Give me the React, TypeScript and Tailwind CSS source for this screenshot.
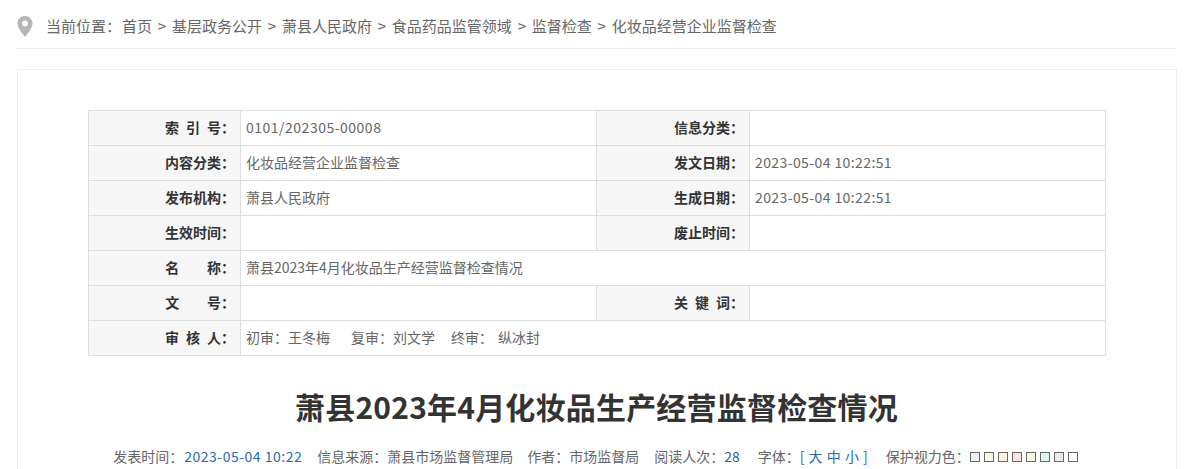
import React from 'react';

const font = "font-['Noto_Sans_CJK_SC','Liberation_Sans',sans-serif]";

const crumbs = ['基层政务公开', '萧县人民政府', '食品药品监管领域', '监督检查', '化妆品经营企业监督检查'];

const swatches = ['bg-[#eef0f4]', 'bg-[#f9fbe8]', 'bg-[#fdf1e3]', 'bg-[#fde3dd]', 'bg-[#f0fcdf]', 'bg-[#dcf8ef]', 'bg-[#e9e9ee]', 'bg-white'];

const Label = ({ children, wide }: { children: React.ReactNode; wide?: boolean }) => (
  <div className={`${wide ? 'w-[153px]' : 'w-[152px]'} shrink-0 bg-[#f7f7f7] border-r border-[#dedede] pr-[5px] text-right font-bold text-[#333] whitespace-pre [word-spacing:0.3px]`}>
    {children}
  </div>
);

const Row = ({ label, value, label2, value2, last }: { label: string; value?: React.ReactNode; label2?: string; value2?: string; last?: boolean }) => (
  <div className={`flex leading-[33px] ${last ? 'h-[34px]' : 'h-[35px] border-b border-[#dedede]'}`}>
    <Label>{label}</Label>
    <div className={`${label2 ? 'w-[356px] shrink-0 border-r border-[#dedede]' : 'flex-1'} pl-[5px] text-[#666] whitespace-pre`}>{value}</div>
    {label2 && (
      <>
        <Label wide>{label2}</Label>
        <div className="flex-1 pl-[5px] text-[#666] tracking-[0.4px]">{value2}</div>
      </>
    )}
  </div>
);

export default function App() {
  return (
    <div className={`${font} h-[469px] overflow-hidden bg-white text-[14px] px-[17px]`}>
      {/* breadcrumb */}
      <div className="flex items-center h-[49px] border-b border-[#eeeeee] pt-[5px] w-[1160px]">
        <svg width="16" height="21" viewBox="0 0 16 21" className="shrink-0 mt-[-1px]">
          <path
            fillRule="evenodd"
            fill="#b5b5b5"
            d="M8 0C3.600 0 0.500 3.300 0.500 7.500 0.500 12 5 17 8 21c3-4 7.500-9 7.500-13.500C15.500 3.300 12.400 0 8 0zM8 4.500a3 3 0 1 1 0 6 3 3 0 0 1 0-6z"
          />
        </svg>
        <div className="ml-[13px] text-[15px] text-[#666] whitespace-pre">
          当前位置：<span className="ml-[1px]">首页</span>
          {crumbs.map((c) => (
            <span key={c}>
              <span className="mx-[5.8px]">&gt;</span>
              {c}
            </span>
          ))}
        </div>
      </div>

      {/* content panel */}
      <div className="mt-[20px] w-[1160px] h-[500px] border border-[#eeeeee] pt-[40px] pl-[70px]">
        <div className="w-[1018px] border border-[#dedede]">
          <Row label={'索  引  号：'} value={<span className="tracking-[0.5px]">0101/202305-00008</span>} label2="信息分类：" />
          <Row label="内容分类：" value="化妆品经营企业监督检查" label2="发文日期：" value2="2023-05-04 10:22:51" />
          <Row label="发布机构：" value="萧县人民政府" label2="生成日期：" value2="2023-05-04 10:22:51" />
          <Row label="生效时间：" label2="废止时间：" />
          <Row label={'名        称：'} value="萧县2023年4月化妆品生产经营监督检查情况" />
          <Row label={'文        号：'} label2={'关  键  词：'} />
          <Row
            label={'审  核  人：'}
            value={
              <>
                <span>初审：王冬梅</span>
                <span className="ml-[21px]">复审：刘文学</span>
                <span className="ml-[16px]">终审：</span>
                <span className="ml-[5px]">纵冰封</span>
              </>
            }
            last
          />
        </div>

        <h1 className="mt-[27px] w-[1017px] text-center text-[30px] leading-[46px] font-bold text-[#333] tracking-[0.2px]">
          萧县2023年4月化妆品生产经营监督检查情况
        </h1>

        <div className="mt-[17px] w-[1015px] flex justify-center items-center leading-[20px] text-[#666] whitespace-pre">
          <span>发表时间：</span>
          <span className="text-[#2a6ab0] tracking-[0.5px] ml-[1px]">2023-05-04 10:22</span>
          <span className="ml-[15px]">信息来源：萧县市场监督管理局</span>
          <span className="ml-[14px]">作者：市场监督局</span>
          <span className="ml-[15px]">阅读人次：</span>
          <span className="text-[#2a5ca8]">28</span>
          <span className="ml-[18px]">字体：</span>
          <span className="text-[#2a6ab0] [word-spacing:1px]">[ 大 中 小 ]</span>
          <span className="ml-[18px]">保护视力色：</span>
          <span className="flex gap-[4px] mt-[1px]">
            {swatches.map((s, i) => (
              <span key={i} className={`block w-[10px] h-[10px] border border-[#666] ${s}`} />
            ))}
          </span>
        </div>
      </div>
    </div>
  );
}
